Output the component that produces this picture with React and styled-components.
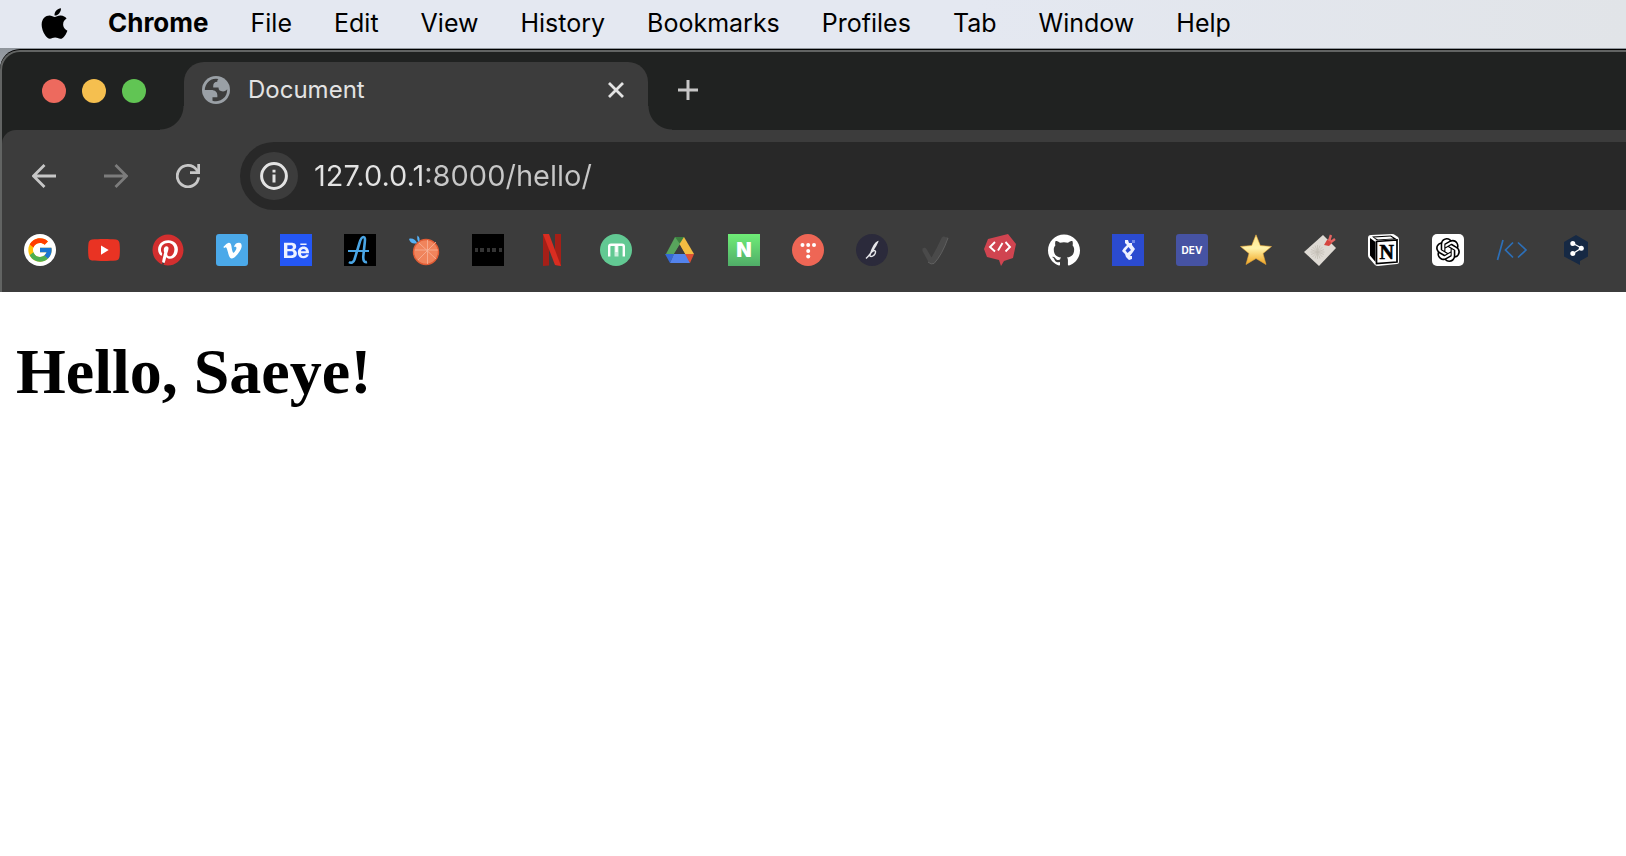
import React from 'react'
import styled, { createGlobalStyle } from 'styled-components'
import { FaApple, FaBehance, FaPinterest, FaVimeoV } from 'react-icons/fa'
import { FcGoogle } from 'react-icons/fc'
import { SiGithub, SiOpenai } from 'react-icons/si'

const COLOR = {
  MENU: '#e4e8f1',
  STRIP: '#202221',
  TOOLBAR: '#3c3c3c',
  FIELD: '#282828',
  EDGE: '#626463',
  TEXT: '#e3e3e3',
  TEXT_DIM: '#c7c7c7',
  DISABLED: '#7c7c7c',
}

const MENUS = ['File', 'Edit', 'View', 'History', 'Bookmarks', 'Profiles', 'Tab', 'Window', 'Help']

const LIGHTS = [
  { label: 'Close window', color: '#ed6a5e' },
  { label: 'Minimize window', color: '#f5bf4f' },
  { label: 'Zoom window', color: '#61c554' },
]

const Svg = ({ children }) => (
  <svg width='32' height='32' viewBox='0 0 32 32' fill='none' aria-hidden='true'>
    {children}
  </svg>
)

const Globe = () => (
  <svg width='28' height='28' viewBox='2 2 20 20' aria-hidden='true'>
    <circle cx='12' cy='12' r='10' fill='#9aa0a6' />
    <path
      d='M4 12h4.400c3.407.022 4.922 1.730 4.543 5.127H9.488v2.470a8.004 8.004 0 0 0 10.498-8.083C19.327 12.504 18.332 13 17 13c-2.137 0-3.206-.916-3.206-2.750h-3.748c-.274-2.728.683-4.092 2.870-4.092 0-.975.327-1.597.811-1.970A8.004 8.004 0 0 0 4 12Z'
      fill={COLOR.TOOLBAR}
    />
  </svg>
)

const BackArrow = ({ flip }) => (
  <svg width='24' height='24' viewBox='0 0 24 24' fill='none' stroke='currentColor' strokeWidth='2.800' aria-hidden='true'>
    <path d={flip ? 'M0 12H22.500M11.500 1L22.500 12L11.500 23' : 'M24 12H1.500M12.500 1L1.500 12L12.500 23'} />
  </svg>
)

const Reload = () => (
  <svg width='24' height='24' viewBox='0 0 24 24' fill='none' stroke='currentColor' strokeWidth='2.800' aria-hidden='true'>
    <path d='M22.600 13.300A10.700 10.700 0 1 1 20.400 5.500L22.500 8.500' />
    <path d='M22.700 0V8.700H14' />
  </svg>
)

const Info = () => (
  <svg width='28' height='28' viewBox='0 0 28 28' fill='none' stroke={COLOR.TEXT} aria-hidden='true'>
    <circle cx='14' cy='14' r='12.400' strokeWidth='3' />
    <path d='M14 12.500V20.500M14 7.700V10.500' strokeWidth='3' />
  </svg>
)

const Cross = () => (
  <svg width='16' height='16' viewBox='0 0 16 16' fill='none' stroke='currentColor' strokeWidth='2.800' aria-hidden='true'>
    <path d='M1 1L15 15M15 1L1 15' />
  </svg>
)

const Plus = () => (
  <svg width='20' height='20' viewBox='0 0 20 20' fill='none' stroke='currentColor' strokeWidth='3' aria-hidden='true'>
    <path d='M0 10H20M10 0V20' />
  </svg>
)

const BOOKMARKS = [
  { name: 'Google', bg: '#fff', round: '50%', icon: <FcGoogle size={28} /> },
  {
    name: 'YouTube',
    icon: (
      <Svg>
        <path d='M4 5.500C10 4.800 22 4.800 28 5.500C30.500 5.900 31.400 7.500 31.600 10C32 14 32 18 31.600 22C31.300 24.800 30.400 26.200 28 26.600C22 27.200 10 27.200 4 26.600C1.500 26.200 .6 24.800 .4 22C0 18 0 14 .4 10C.6 7.500 1.500 5.900 4 5.500Z' fill='#e93323' />
        <path d='M13 11.500L20.700 16L13 20.700Z' fill='#fff' />
      </Svg>
    ),
  },
  {
    name: 'Pinterest',
    fg: '#d32f2f',
    bg: 'radial-gradient(#fff 13px, transparent 14px)',
    round: '50%',
    icon: <FaPinterest size={32} />,
  },
  { name: 'Vimeo', bg: '#4ba9e9', fg: '#fff', round: '3px', icon: <FaVimeoV size={21} /> },
  { name: 'Behance', bg: '#2457f5', fg: '#edf1ff', icon: <FaBehance size={25} /> },
  {
    name: 'Awwwards',
    bg: '#000',
    icon: (
      <Svg>
        <path d='M5 28C7 29.500 9.500 28.500 10.500 25.500L15.500 9C16.500 5.500 17.500 3 19.500 3C21.500 3 21 6 20.700 9L19.300 22C19 26 20 28.800 23 28' stroke='#4aa5e4' strokeWidth='2.600' />
        <path d='M4 17H25' stroke='#4aa5e4' strokeWidth='2.200' />
      </Svg>
    ),
  },
  {
    name: 'Tangerine',
    icon: (
      <Svg>
        <circle cx='18' cy='18' r='12.500' fill='#f0845c' stroke='#e05c35' strokeWidth='1.400' />
        <path d='M19.500 6V30M7 16H30M11 9L28 25M28 8L10 26' stroke='#f8b49b' strokeWidth='.8' />
        <path d='M1 5C4 3.600 8 6 9 9C6 10.500 2 9 1 5ZM9.500 1.500C12 3.500 12 6 11 8C9 6.500 9 4 9.500 1.500Z' fill='#55b0f5' />
      </Svg>
    ),
  },
  {
    name: 'Portfolio',
    bg: '#000',
    icon: (
      <Svg>
        <path d='M3 14H6V18H3ZM8 14H12V18H8ZM15 14H18V18H15ZM20 14H24V18H20ZM27 14H30V18H27Z' fill='#343434' />
      </Svg>
    ),
  },
  {
    name: 'Netflix',
    icon: (
      <Svg>
        <path d='M7 0H13V31.500L7 32ZM19 0H25V32L19 31Z' fill='#a51f17' />
        <path d='M7 0H13L25 32L19 31Z' fill='#d92d21' />
      </Svg>
    ),
  },
  {
    name: 'Medium clone',
    bg: '#62c993',
    round: '50%',
    icon: (
      <Svg>
        <path d='M14.500 11H18.500V22.500H14.500Z' fill='#c9eddb' />
        <path d='M9.200 22.500V12.500Q9.200 10.700 11 10.700H22Q23.800 10.700 23.800 12.500V22.500' stroke='#fff' strokeWidth='2.400' />
        <path d='M16.500 11V18' stroke='#fff' strokeWidth='2.400' />
      </Svg>
    ),
  },
  {
    name: 'Google Drive',
    icon: (
      <Svg>
        <path d='M11 3H20L16 10L7.500 24.500L2 20Z' fill='#58a45c' />
        <path d='M11 3H20L16 10Z' fill='#3c8040' />
        <path d='M20 3L30 20H21L15.500 10Z' fill='#f3bd42' />
        <path d='M1 20H10L6 29Z' fill='#3569d5' />
        <path d='M10 20H22L26 29H6Z' fill='#5383ec' />
        <path d='M21 20H30L26 29Z' fill='#dc5035' />
        <path d='M15.500 11.500L21 20H10Z' fill={COLOR.TOOLBAR} />
      </Svg>
    ),
  },
  { name: 'NameCheap', bg: 'linear-gradient(#6fed77, #50ad68)', fg: '#fff', label: 'N', size: '20px', weight: 900 },
  {
    name: 'Tistory',
    bg: '#ee6655',
    round: '50%',
    icon: (
      <Svg>
        <g fill='#fff'>
          <circle cx='10.500' cy='11' r='2' />
          <circle cx='16.200' cy='11' r='2' />
          <circle cx='22' cy='11' r='2' />
          <circle cx='16.200' cy='17' r='2' />
          <circle cx='16.200' cy='22.500' r='2' />
        </g>
      </Svg>
    ),
  },
  {
    name: 'Blog',
    bg: '#2b2a3b',
    round: '50%',
    icon: (
      <Svg>
        <path d='M10 24.500C14 21 20 12 21.500 8C19 9 16 15 14 21C13 24 20 22 19.500 17.500C19 15.500 16 17 15 19' stroke='#e6e6ea' strokeWidth='1.400' />
      </Svg>
    ),
  },
  {
    name: 'Checklist',
    icon: (
      <Svg>
        <path d='M2.500 14.500Q5 13 6.500 15L11.500 23.500Q17 14 21.500 4Q23.500 1.500 26 3.500Q28.500 1.500 27.500 5Q22.500 19 15.500 28Q12 31 8.500 28L2.500 17Z' fill='#4a4a4a' />
        <path d='M8 28Q11 31 14 29.500Q22 21 28 4' stroke='#686868' strokeWidth='.8' />
      </Svg>
    ),
  },
  {
    name: 'Programmers',
    icon: (
      <Svg>
        <path d='M4 5L24 0L32 10L29 24L20 27L17 32L15 26L3 23L0 15Z' fill='#d04450' />
        <path d='M11 8L6 13L11 17.500M21.500 8L26 13L21.500 17.500M18.500 9L14 16.500' stroke='#fff' strokeWidth='1.900' />
      </Svg>
    ),
  },
  { name: 'GitHub', fg: '#fff', icon: <SiGithub size={32} /> },
  {
    name: 'Data lab',
    bg: '#2b4bd0',
    icon: (
      <Svg>
        <path d='M13 6H16L17 9H20V11L23 15L21 18L18 22H20V25L17 26L14 23L13 20L10 17L12 14L15 11L13 9Z' fill='#eef1ff' />
        <path d='M16.500 13L19 16L15.500 19L13.500 16.500Z' fill='#2b4bd0' />
        <path d='M20 6H23V9H20Z' fill='#7189e8' />
      </Svg>
    ),
  },
  { name: 'DEV Community', bg: '#4653a3', fg: '#fff', round: '3px', label: 'DEV', size: '10px', weight: 700 },
  {
    name: 'Favorites',
    icon: (
      <Svg>
        <defs>
          <linearGradient id='star' x2='0' y2='1'>
            <stop stopColor='#ffe58a' />
            <stop offset='.45' stopColor='#fff3ab' />
            <stop offset='1' stopColor='#f1a51f' />
          </linearGradient>
        </defs>
        <path d='M16 .8L20.300 11.500L31.500 12.500L23 19.500L26 30.500L16 24.500L6 30.500L9 19.500L.5 12.500L11.700 11.500Z' fill='url(#star)' stroke='#e9a93b' strokeWidth='.6' strokeLinejoin='round' />
      </Svg>
    ),
  },
  {
    name: 'Notes',
    icon: (
      <Svg>
        <path d='M19 1L32 14L15 32L0 18Z' fill='#dedad4' />
        <path d='M13.500 11V25M6.500 18H20.500M8.500 13L18.500 23M18.500 13L8.500 23M11 11.500L16 24.500M7 15.500L20 20.500M20 15.500L7 20.500M16 11.500L11 24.500' stroke='#c4bfb6' strokeWidth='.8' />
        <path d='M20 11L23 6L27 5L28 9L25 12Z' fill='#d5453f' />
        <path d='M25 7L27 1M27 8L31 5' stroke='#e56562' strokeWidth='2.400' />
      </Svg>
    ),
  },
  {
    name: 'Notion',
    icon: (
      <Svg>
        <path d='M3 1L24 0Q26 0 27 1L30 3Q31 4 31 6V28Q31 30 29 30L10 32Q8 32 7 31L1 24Q0 23 0 21V4Q0 1 3 1Z' fill='#fff' />
        <path d='M4 2.600L23 1.500L28.500 5L9 6.500ZM2 4L7.500 8V28L2 21.500Z' fill='#000' />
        <path d='M6 3.500L22.500 2.500L25.500 4.500L10 5.500Z' fill='#fff' />
        <path d='M8.500 7.500L29 6V28L8.500 29.500Z' fill='#fff' stroke='#000' strokeWidth='1.700' />
        <text x='18.700' y='24.500' textAnchor='middle' fill='#000' stroke='#000' strokeWidth='.6' fontFamily='Liberation Serif, serif' fontWeight='700' fontSize='20'>N</text>
      </Svg>
    ),
  },
  { name: 'ChatGPT', bg: '#fff', fg: '#000', round: '5px', icon: <SiOpenai size={24} /> },
  {
    name: 'Code snippets',
    icon: (
      <Svg>
        <path d='M7 6L1.500 26M17 8.500L9.500 16L17 23.500M22 8.500L30 16L22 23.500' stroke='#2c6fb8' strokeWidth='1.700' />
      </Svg>
    ),
  },
  {
    name: 'DeepL',
    icon: (
      <Svg>
        <path d='M16 1L28 8V22.500L20 27V31L4 22.500V8Z' fill='#162944' />
        <path d='M13 9.500L21.500 14L13 19.500' stroke='#fff' strokeWidth='1.300' />
        <g fill='#fff'>
          <circle cx='12.800' cy='9.500' r='2.500' />
          <circle cx='21.300' cy='14.300' r='2.500' />
          <circle cx='12.800' cy='19.500' r='2.500' />
        </g>
      </Svg>
    ),
  },
]

const App = () => (
  <>
    <GlobalStyle />
    <MenuBar aria-label='Menu bar'>
      <AppleButton aria-label='Apple menu'>
        <FaApple size={35} />
      </AppleButton>
      <AppName>Chrome</AppName>
      {MENUS.map(menu => (
        <MenuItem key={menu}>{menu}</MenuItem>
      ))}
    </MenuBar>
    <Desktop>
      <Window>
        <TabStrip>
          <Lights>
            {LIGHTS.map(({ label, color }) => (
              <Light key={label} aria-label={label} $color={color} />
            ))}
          </Lights>
          <Flare $side='left' />
          <Tab>
            <Globe />
            <TabTitle>Document</TabTitle>
            <IconButton aria-label='Close tab' $size='16px'>
              <Cross />
            </IconButton>
          </Tab>
          <Flare $side='right' />
          <NewTab aria-label='New tab' $size='32px'>
            <Plus />
          </NewTab>
        </TabStrip>
        <Toolbar>
          <AddressRow>
            <Nav>
              <IconButton aria-label='Back' $size='48px'>
                <BackArrow />
              </IconButton>
              <IconButton aria-label='Forward' $size='48px' disabled>
                <BackArrow flip />
              </IconButton>
              <IconButton aria-label='Reload' $size='48px'>
                <Reload />
              </IconButton>
            </Nav>
            <AddressBar>
              <SiteInfo aria-label='View site information' $size='48px'>
                <Info />
              </SiteInfo>
              <AddressInput aria-label='Address' defaultValue='127.0.0.1:8000/hello/' spellCheck='false' />
            </AddressBar>
          </AddressRow>
          <BookmarkBar aria-label='Bookmarks'>
            {BOOKMARKS.map(({ name, bg, fg, round, icon, label, size, weight }) => (
              <Bookmark
                key={name}
                href='#'
                aria-label={name}
                $bg={bg}
                $fg={fg}
                $round={round}
                $size={size}
                $weight={weight}
              >
                {icon || label}
              </Bookmark>
            ))}
          </BookmarkBar>
        </Toolbar>
      </Window>
    </Desktop>
    <Page>
      <Heading>Hello, Saeye!</Heading>
    </Page>
  </>
)

const GlobalStyle = createGlobalStyle`
  *, *::before, *::after {
    box-sizing: border-box;
  }

  body {
    margin: 0;
    background: #fff;
    font-family: Inter, 'Liberation Sans', sans-serif;
    overflow-x: hidden;
  }

  button, input {
    margin: 0;
    padding: 0;
    border: 0;
    background: none;
    font: inherit;
  }

  svg {
    display: block;
    flex-shrink: 0;
  }
`

const MenuBar = styled.nav`
  display: flex;
  align-items: center;
  gap: 42px;
  height: 48px;
  padding: 0 36px;
  background: linear-gradient(90deg, ${COLOR.MENU} 60%, #e1e4e8);
`

const AppleButton = styled.button`
  display: flex;
  justify-content: center;
  width: 36px;
  margin-right: -6px;
  padding-bottom: 2px;
`

const MenuItem = styled.button`
  color: #000;
  font-size: 25px;
  line-height: 46px;
  padding-bottom: 2px;
`

const AppName = styled(MenuItem)`
  font-size: 26px;
  font-weight: 700;
`

const Desktop = styled.div`
  padding-top: 2px;
  background: linear-gradient(#8f959c, #a5a9ae 24px, #000 24px);
`

const Window = styled.div`
  border: solid ${COLOR.EDGE};
  border-width: 2px 0 0 2px;
  border-top-left-radius: 20px;
  background: ${COLOR.STRIP};
  box-shadow: 0 -1px 0 #000;
  overflow: hidden;
`

const TabStrip = styled.div`
  display: flex;
  align-items: flex-end;
  height: 78px;
`

const Lights = styled.div`
  display: flex;
  align-self: center;
  gap: 16px;
  padding: 0 14px 0 40px;
`

const Light = styled.button`
  width: 24px;
  height: 24px;
  border-radius: 50%;
  background: ${({ $color }) => $color};
`

// concave corner that joins the active tab to the toolbar
const Flare = styled.span`
  width: 24px;
  height: 24px;
  background: radial-gradient(
    circle at ${({ $side }) => ($side === 'left' ? '0 0' : '100% 0')},
    transparent 23px,
    ${COLOR.TOOLBAR} 24px
  );
`

const Tab = styled.div`
  display: flex;
  align-items: center;
  width: 464px;
  height: 68px;
  padding: 0 24px 12px 18px;
  border-radius: 20px 20px 0 0;
  background: ${COLOR.TOOLBAR};
  color: ${COLOR.TEXT};
`

const TabTitle = styled.span`
  flex: 1;
  padding-left: 18px;
  font-size: 24px;
  line-height: 32px;
`

const IconButton = styled.button`
  display: flex;
  flex-shrink: 0;
  align-items: center;
  justify-content: center;
  width: ${({ $size }) => $size};
  height: ${({ $size }) => $size};
  border-radius: 50%;
  color: ${COLOR.TEXT_DIM};

  ${Tab} & {
    color: ${COLOR.TEXT};
  }

  &:disabled {
    color: ${COLOR.DISABLED};
  }
`

const NewTab = styled(IconButton)`
  margin-bottom: 24px;
`

const Toolbar = styled.div`
  padding-top: 12px;
  border-top-left-radius: 14px;
  background: ${COLOR.TOOLBAR};
`

const AddressRow = styled.div`
  display: flex;
  align-items: center;
  gap: 28px;
  padding-left: 18px;
`

const Nav = styled.div`
  display: flex;
  gap: 24px;
`

const AddressBar = styled.div`
  display: flex;
  flex: 1;
  align-items: center;
  gap: 16px;
  height: 68px;
  padding-left: 10px;
  border-radius: 34px 0 0 34px;
  background: ${COLOR.FIELD};
`

const SiteInfo = styled(IconButton)`
  background: ${COLOR.TOOLBAR};
`

// the host is brighter than the port and path
const AddressInput = styled.input`
  flex: 1;
  min-width: 0;
  background: linear-gradient(90deg, ${COLOR.TEXT} 112px, ${COLOR.TEXT_DIM} 112px);
  background-clip: text;
  color: transparent;
  caret-color: ${COLOR.TEXT};
  font-size: 29px;
  line-height: 40px;
  outline: none;
`

const BookmarkBar = styled.nav`
  display: flex;
  gap: 32px;
  padding: 24px 22px 26px;
`

const Bookmark = styled.a`
  display: flex;
  flex-shrink: 0;
  align-items: center;
  justify-content: center;
  width: 32px;
  height: 32px;
  border-radius: ${({ $round }) => $round || 0};
  background: ${({ $bg }) => $bg || 'none'};
  color: ${({ $fg }) => $fg || COLOR.TEXT};
  font-size: ${({ $size }) => $size || '16px'};
  font-weight: ${({ $weight }) => $weight || 400};
  text-decoration: none;
`

const Page = styled.main`
  padding: 0 16px;
`

const Heading = styled.h1`
  margin: 43px 0;
  color: #000;
  font-family: 'Liberation Serif', serif;
  font-size: 64px;
  font-weight: 700;
  line-height: 74px;
`

export default App
